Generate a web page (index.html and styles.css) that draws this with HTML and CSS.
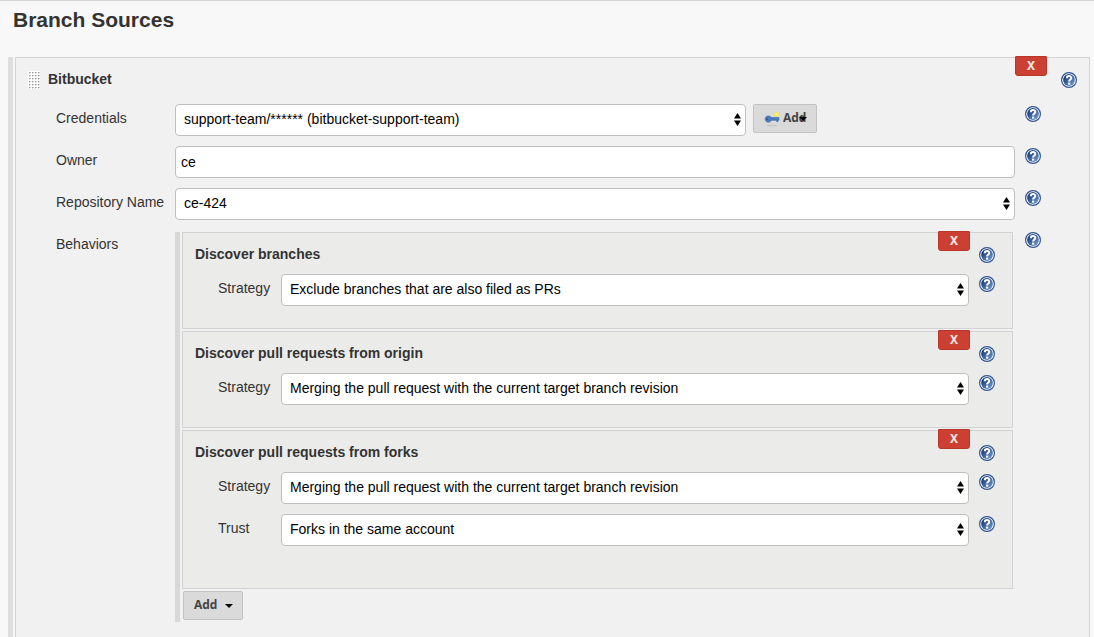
FILE: index.html
```html
<!DOCTYPE html>
<html lang="en">
<head>
<meta charset="utf-8">
<title>Branch Sources</title>
<link rel="stylesheet" href="styles.css">
</head>
<body>
<svg class="symbols" aria-hidden="true">
  <defs>
    <linearGradient id="disc" x1="0" y1="0" x2="1" y2="1">
      <stop offset="0.2" stop-color="#1c3f7e"/>
      <stop offset="1" stop-color="#7ba3d6"/>
    </linearGradient>
  </defs>
  <symbol id="help" viewBox="0 0 16 16">
    <circle cx="8" cy="8" r="7.4" fill="#fff" stroke="#2e5590" stroke-width="1.2"/>
    <circle cx="8" cy="8" r="5.9" fill="url(#disc)"/>
    <path d="M5.8 6.2C5.8 3.4 10.3 3.5 10.3 5.9C10.3 7.6 8.1 7.4 8.1 9.6" fill="none" stroke="#fff" stroke-width="2"/>
    <rect x="7" y="10.6" width="2.2" height="2" fill="#fff"/>
  </symbol>
  <symbol id="updown" viewBox="0 0 7 13">
    <path d="M3.5 0L7 5.4H0zM3.5 13L0 7.6H7z" fill="#000"/>
  </symbol>
  <symbol id="caret" viewBox="0 0 8 4">
    <path d="M0 0H8L4 4z" fill="#000"/>
  </symbol>
</svg>
<main class="page">
  <h1 class="page-title">Branch Sources</h1>
  <div class="source-list">
    <section class="chunk source">
      <button class="delete" type="button">X</button>
      <header class="chunk-head source-head">
        <svg class="handle" viewBox="0 0 12 18" aria-hidden="true">
          <defs><pattern id="dots" width="3" height="3" patternUnits="userSpaceOnUse"><rect width="3" height="3" fill="#fff"/><rect x="1" y="1" width="1" height="1" fill="#999"/><rect x="2" y="1" width="1" height="1" fill="#ccc"/><rect x="1" y="2" width="1" height="1" fill="#ddd"/></pattern></defs>
          <rect width="12" height="18" fill="url(#dots)"/>
        </svg>
        <h2 class="chunk-title">Bitbucket</h2>
        <button class="help" type="button" aria-label="Help for Bitbucket"><svg><use href="#help"/></svg></button>
      </header>
      <div class="form">
        <div class="row">
          <label class="label" for="credentials">Credentials</label>
          <div class="field credentials">
            <div class="select">
              <select id="credentials"><option>support-team/****** (bitbucket-support-team)</option></select>
              <svg class="arrows"><use href="#updown"/></svg>
            </div>
            <button class="add add-key" type="button">
              <svg class="key" viewBox="0 0 16 16" aria-hidden="true">
                <ellipse cx="8" cy="14.5" rx="5.5" ry="0.8" fill="#c4c4c4"/>
                <circle cx="12.5" cy="3.5" r="2.5" fill="#f5e84e"/>
                <path d="M4 5C6 5 7 5.6 7.5 6.5H15V9.3H14V10.5H12.5V9.3H7.5C6.5 12 1.2 12 1.2 8.2C1.2 6 2.5 5 4 5z" fill="#4a7dbd" stroke="#3a68a8" stroke-width="0.6"/>
                <circle cx="3" cy="8" r="0.9" fill="#2a5590"/>
                <circle cx="12.5" cy="3.3" r="1" fill="#fffbc0"/>
              </svg>
              <span>Add</span>
              <svg class="caret"><use href="#caret"/></svg>
            </button>
          </div>
          <button class="help" type="button" aria-label="Help for Credentials"><svg><use href="#help"/></svg></button>
        </div>
        <div class="row">
          <label class="label" for="owner">Owner</label>
          <div class="field"><input class="text" id="owner" type="text" value="ce"></div>
          <button class="help" type="button" aria-label="Help for Owner"><svg><use href="#help"/></svg></button>
        </div>
        <div class="row">
          <label class="label" for="repository">Repository Name</label>
          <div class="field select">
            <select id="repository"><option>ce-424</option></select>
            <svg class="arrows"><use href="#updown"/></svg>
          </div>
          <button class="help" type="button" aria-label="Help for Repository Name"><svg><use href="#help"/></svg></button>
        </div>
        <div class="row">
          <span class="label">Behaviors</span>
          <div class="behaviors">
            <section class="chunk behavior">
              <button class="delete" type="button">X</button>
              <header class="chunk-head">
                <h3 class="chunk-title">Discover branches</h3>
                <button class="help" type="button" aria-label="Help for Discover branches"><svg><use href="#help"/></svg></button>
              </header>
              <div class="form">
                <div class="row">
                  <label class="label" for="branches">Strategy</label>
                  <div class="field select">
                    <select id="branches"><option>Exclude branches that are also filed as PRs</option></select>
                    <svg class="arrows"><use href="#updown"/></svg>
                  </div>
                  <button class="help" type="button" aria-label="Help for Strategy"><svg><use href="#help"/></svg></button>
                </div>
              </div>
            </section>
            <section class="chunk behavior">
              <button class="delete" type="button">X</button>
              <header class="chunk-head">
                <h3 class="chunk-title">Discover pull requests from origin</h3>
                <button class="help" type="button" aria-label="Help for Discover pull requests from origin"><svg><use href="#help"/></svg></button>
              </header>
              <div class="form">
                <div class="row">
                  <label class="label" for="origin">Strategy</label>
                  <div class="field select">
                    <select id="origin"><option>Merging the pull request with the current target branch revision</option></select>
                    <svg class="arrows"><use href="#updown"/></svg>
                  </div>
                  <button class="help" type="button" aria-label="Help for Strategy"><svg><use href="#help"/></svg></button>
                </div>
              </div>
            </section>
            <section class="chunk behavior forks">
              <button class="delete" type="button">X</button>
              <header class="chunk-head">
                <h3 class="chunk-title">Discover pull requests from forks</h3>
                <button class="help" type="button" aria-label="Help for Discover pull requests from forks"><svg><use href="#help"/></svg></button>
              </header>
              <div class="form">
                <div class="row">
                  <label class="label" for="forks">Strategy</label>
                  <div class="field select">
                    <select id="forks"><option>Merging the pull request with the current target branch revision</option></select>
                    <svg class="arrows"><use href="#updown"/></svg>
                  </div>
                  <button class="help" type="button" aria-label="Help for Strategy"><svg><use href="#help"/></svg></button>
                </div>
                <div class="row">
                  <label class="label" for="trust">Trust</label>
                  <div class="field select">
                    <select id="trust"><option>Forks in the same account</option></select>
                    <svg class="arrows"><use href="#updown"/></svg>
                  </div>
                  <button class="help" type="button" aria-label="Help for Trust"><svg><use href="#help"/></svg></button>
                </div>
              </div>
            </section>
            <button class="add add-behavior" type="button"><span>Add</span><svg class="caret"><use href="#caret"/></svg></button>
          </div>
          <button class="help" type="button" aria-label="Help for Behaviors"><svg><use href="#help"/></svg></button>
        </div>
      </div>
    </section>
  </div>
</main>
</body>
</html>
```

FILE: styles.css
```css
* {
  box-sizing: border-box;
}

body {
  margin: 0;
  background: #f8f8f8;
  color: #333;
  font: 14px/20px "Liberation Sans", Arial, sans-serif;
}

button,
input,
select {
  margin: 0;
  font: inherit;
}

.symbols {
  position: absolute;
  width: 0;
  height: 0;
}

.page {
  display: flex;
  flex-direction: column;
  min-height: 100vh;
  border-top: 1px solid #d6d6d6;
}

.page-title {
  margin: 0;
  padding: 7px 13px 25px;
  font-size: 21px;
  line-height: 24px;
}

.source-list {
  display: flex;
  flex: 1;
  margin: 0 4px 0 8px;
  padding-left: 2px;
  border-left: 5px solid #dedede;
}

.chunk {
  position: relative;
  border: 1px solid #d2d2d2;
}

.source {
  flex: 1;
  padding-bottom: 14px;
  border-bottom: 0;
  background: #f1f1f1;
}

.chunk-head {
  display: flex;
  align-items: center;
  height: 41px;
  padding: 2px 17px 0 12px;
}

.source-head {
  height: 46px;
  padding: 0 12px 2px 12px;
}

.handle {
  width: 12px;
  height: 18px;
  margin-right: 8px;
}

.chunk-title {
  flex: 1;
  margin: 0;
  padding-bottom: 2px;
  font-size: 14px;
  line-height: 20px;
}

.form {
  display: grid;
  gap: 10px;
}

.source > .form {
  padding: 0 48px 0 40px;
}

.row {
  display: grid;
  grid-template-columns: 119px minmax(0, 1fr) 16px;
  align-items: start;
}

.label {
  line-height: 28px;
}

.row > .help {
  margin-top: 2px;
}

.field,
.behaviors {
  margin-right: 10px;
}

.select {
  position: relative;
}

select,
.text {
  display: block;
  width: 100%;
  height: 32px;
  border: 1px solid #bfbfbf;
  border-radius: 4px;
  background: #fff;
  color: #000;
}

select {
  appearance: none;
  padding: 0 20px 2px 8px;
}

.text {
  padding: 0 5px;
}

.arrows {
  position: absolute;
  top: 9px;
  right: 5px;
  width: 7px;
  height: 13px;
  pointer-events: none;
}

.credentials {
  display: flex;
  gap: 7px;
  padding-right: 198px;
}

.credentials .select {
  flex: 1;
}

.help {
  width: 16px;
  height: 16px;
  padding: 0;
  border: 0;
  background: none;
}

.help svg {
  display: block;
  width: 16px;
  height: 16px;
}

.delete {
  position: absolute;
  top: -2px;
  right: 42px;
  width: 32px;
  height: 20px;
  padding: 0;
  border: 1px solid #b93529;
  border-radius: 1px 1px 3px 3px;
  background: #cc4033;
  color: #f8e8e6;
  font: bold 12px/18px "Noto Sans", sans-serif;
}

.add {
  display: flex;
  align-items: center;
  height: 29px;
  padding: 0 9px 0 10px;
  border: 1px solid #c2c2c2;
  border-radius: 2px;
  background: #dadada;
  color: #444;
  font: bold 12px/20px "Open Sans", sans-serif;
}

.add span {
  padding-bottom: 2px;
}

.add-key {
  position: relative;
  width: 64px;
  flex: none;
}

.key {
  flex: none;
  width: 16px;
  height: 16px;
  margin-right: 3px;
}

.caret {
  width: 8px;
  height: 4px;
}

.add-key .caret {
  position: absolute;
  top: 12px;
  right: 9px;
}

.behaviors {
  display: flex;
  flex-direction: column;
  align-items: stretch;
  gap: 2px;
  margin-top: 2px;
  padding: 0 2px 2px;
  border-left: 5px solid #d8d8d8;
}

.behavior {
  padding-bottom: 22px;
  background: #ebebea;
}

.forks {
  padding-bottom: 42px;
}

.behavior .form {
  padding: 0 17px 0 35px;
}

.behavior .row {
  grid-template-columns: 63px minmax(0, 1fr) 16px;
}

.add-behavior {
  align-self: flex-start;
  justify-content: space-between;
  width: 60px;
  margin-left: 1px;
}
```
